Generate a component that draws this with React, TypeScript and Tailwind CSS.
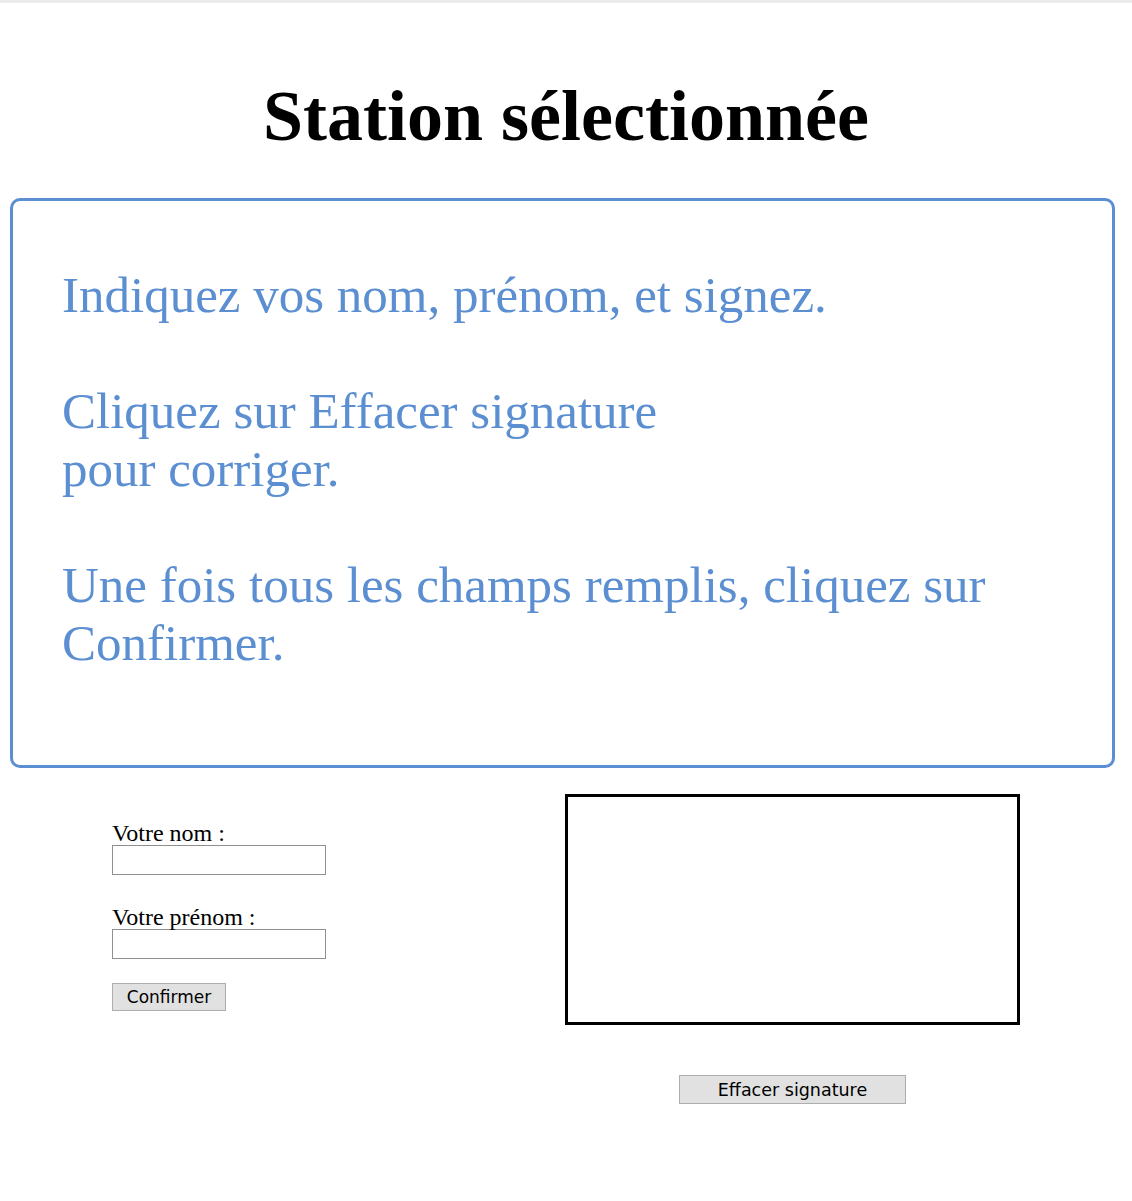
import { useState } from "react";

const SERIF = "font-['Liberation_Serif',serif]";
const SANS = "font-['DejaVu_Sans',sans-serif]";

export default function App() {
  const [nom, setNom] = useState("");
  const [prenom, setPrenom] = useState("");

  return (
    <div className={`min-h-[1201px] bg-white border-t-[3px] border-[#ececec] ${SERIF}`}>
      <h1 className="mt-[77px] text-center text-[72px] leading-[72px] font-bold text-black">
        Station sélectionnée
      </h1>

      {/* Instructions */}
      <div className="mt-[46px] ml-[10px] w-[1105px] border-[3px] border-[#5b8fd1] rounded-[10px] pl-[49px] pt-[65px] pb-[93px] text-[51px] leading-[58px] text-[#5b8fd1]">
        <p>Indiquez vos nom, prénom, et signez.</p>
        <p className="mt-[58px]">
          Cliquez sur Effacer signature
          <br />
          pour corriger.
        </p>
        <p className="mt-[58px]">
          Une fois tous les champs remplis, cliquez sur Confirmer.
        </p>
      </div>

      <div className="flex mt-[26px]">
        {/* Form */}
        <div className="w-[565px] pl-[112px] pt-[27px]">
          <label className="block text-[24px] leading-[24px] text-black">Votre nom :</label>
          <input
            value={nom}
            onChange={(e) => setNom(e.target.value)}
            className="block w-[214px] h-[30px] border border-[#8f8f8f] bg-white"
          />
          <label className="block mt-[30px] text-[24px] leading-[24px] text-black">
            Votre prénom :
          </label>
          <input
            value={prenom}
            onChange={(e) => setPrenom(e.target.value)}
            className="block w-[214px] h-[30px] border border-[#8f8f8f] bg-white"
          />
          <button
            className={`mt-[24px] w-[114px] h-[28px] bg-[#e1e1e1] border border-[#adadad] text-[17px] leading-[20px] text-black ${SANS}`}
          >
            Confirmer
          </button>
        </div>

        {/* Signature */}
        <div className="flex flex-col items-center w-[455px]">
          <div className="w-[455px] h-[231px] border-[3px] border-black bg-white" />
          <button
            className={`mt-[50px] w-[227px] h-[29px] bg-[#e1e1e1] border border-[#adadad] text-[17.5px] leading-[20px] text-black ${SANS}`}
          >
            Effacer signature
          </button>
        </div>
      </div>
    </div>
  );
}
